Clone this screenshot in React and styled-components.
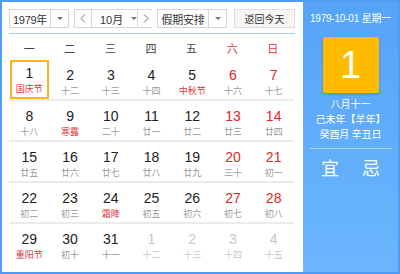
import React from "react";
import styled, { createGlobalStyle } from "styled-components";

const GlobalStyle = createGlobalStyle`
  body {
    margin: 0;
    font-family: "Liberation Sans", "Noto Sans CJK SC", sans-serif;
  }
`;

const Widget = styled.div`
  width: 400px;
  height: 274px;
  box-sizing: border-box;
  border: 2px solid #4e9cf6;
  display: flex;
  background: #fff;
`;

const LeftPanel = styled.div`
  width: 301px;
  box-sizing: border-box;
  padding: 7px 6px 0 7px;
  background: #fff;
`;

const Header = styled.div`
  display: flex;
  height: 19px;
  padding-bottom: 5px;
  border-bottom: 1px solid #a3cbf3;
  width: 286px;
`;

const Select = styled.div`
  display: flex;
  box-sizing: border-box;
  width: ${(p) => p.$width}px;
  height: 19px;
  border: 1px solid #d6d6d6;
  background: #fff;
  margin-right: ${(p) => p.$gap || 0}px;
`;

const SelectText = styled.div`
  flex: 1;
  display: flex;
  align-items: center;
  justify-content: center;
  font-size: 11px;
  color: #333;
  letter-spacing: -0.3px;
  white-space: nowrap;
`;

const ArrowBox = styled.div`
  width: 17px;
  display: flex;
  align-items: center;
  justify-content: center;
  border-left: 1px solid #d6d6d6;
  &::after {
    content: "";
    border-left: 3px solid transparent;
    border-right: 3px solid transparent;
    border-top: 3px solid #777;
  }
`;

const MonthGroup = styled.div`
  display: flex;
  box-sizing: border-box;
  width: 78px;
  height: 19px;
  border: 1px solid #d6d6d6;
  margin-right: 5px;
`;

const NavButton = styled.div`
  flex: 0 0 ${(p) => p.$width}px;
  display: flex;
  align-items: center;
  justify-content: center;
  border-${(p) => p.$side}: 1px solid #d6d6d6;
  background: #fff;
`;

const MonthText = styled.div`
  flex: 1;
  display: flex;
  align-items: center;
  padding-left: 8px;
  font-size: 11px;
  color: #333;
  white-space: nowrap;
`;

const SmallArrow = styled.span`
  margin-left: 8px;
  border-left: 3px solid transparent;
  border-right: 3px solid transparent;
  border-top: 3px solid #777;
`;

const TodayButton = styled.div`
  box-sizing: border-box;
  width: 61px;
  height: 19px;
  margin-left: 2px;
  border: 1px solid #dcdcdc;
  background: #f5f5f5;
  font-size: 10px;
  color: #333;
  display: flex;
  align-items: center;
  justify-content: center;
  white-space: nowrap;
`;

const WeekRow = styled.div`
  display: grid;
  grid-template-columns: repeat(7, 1fr);
  width: 284px;
  height: 26px;
  align-items: center;
`;

const WeekDay = styled.div`
  text-align: center;
  font-size: 11px;
  padding-top: 1px;
  color: ${(p) => (p.$weekend ? "#e0353b" : "#444")};
`;

const DayRow = styled.div`
  display: grid;
  grid-template-columns: repeat(7, 1fr);
  width: 285px;
  height: 39px;
  border-bottom: 2px solid ${(p) => (p.$last ? "transparent" : "#ebebeb")};
`;

const Cell = styled.div`
  box-sizing: border-box;
  margin: 0 1px;
  display: flex;
  flex-direction: column;
  align-items: center;
  border: 2px solid ${(p) => (p.$selected ? "#fdb414" : "transparent")};
  padding-top: ${(p) => (p.$selected ? 4 : 6)}px;
`;

const DayNum = styled.div`
  font-size: 14px;
  line-height: 15px;
  color: ${(p) => (p.$other ? "#c3c7d0" : p.$weekend ? "#e0262d" : "#222")};
`;

const Lunar = styled.div`
  margin-top: 2px;
  font-size: 9px;
  line-height: 12px;
  font-family: "Noto Sans CJK SC", sans-serif;
  color: ${(p) => (p.$other ? "#c8c8c8" : p.$festival ? "#e0353b" : "#9a9a9a")};
`;

const RightPanel = styled.div`
  flex: 1;
  background: linear-gradient(180deg, #55a4f6 0%, #6cb6ff 100%);
  color: #fff;
  display: flex;
  flex-direction: column;
  align-items: center;
  padding-top: 10px;
`;

const DateLine = styled.div`
  font-size: 10px;
  line-height: 14px;
  letter-spacing: -0.2px;
`;

const BigDay = styled.div`
  margin-top: 11px;
  width: 56px;
  height: 56px;
  border-radius: 2px;
  background: #ffbb00;
  box-shadow: 0 1px 3px rgba(0, 0, 0, 0.2);
  display: flex;
  align-items: center;
  justify-content: center;
  font-size: 38px;
  color: #fff;
`;

const LunarInfo = styled.div`
  margin-top: 3px;
  font-size: 10px;
  line-height: 15px;
  text-align: center;
  font-family: "Noto Sans CJK SC", sans-serif;
`;

const Rule = styled.div`
  align-self: stretch;
  margin: 7px 6px 0 7px;
  height: 1px;
  background: rgba(255, 255, 255, 0.45);
`;

const Advice = styled.div`
  margin-top: 8px;
  display: flex;
  gap: 23px;
  font-size: 18px;
  line-height: 20px;
  font-family: "Noto Sans CJK SC", sans-serif;
`;

const Chevron = ({ dir }) => (
  <svg width="6" height="9" viewBox="0 0 6 9">
    <polyline
      points={dir === "left" ? "5,0.5 1,4.5 5,8.5" : "1,0.5 5,4.5 1,8.5"}
      fill="none"
      stroke="#777"
      strokeWidth="1"
    />
  </svg>
);

const rows = [
  [[1, "国庆节", 1], [2, "十二"], [3, "十三"], [4, "十四"], [5, "中秋节", 1], [6, "十六"], [7, "十七"]],
  [[8, "十八"], [9, "寒露", 1], [10, "二十"], [11, "廿一"], [12, "廿二"], [13, "廿三"], [14, "廿四"]],
  [[15, "廿五"], [16, "廿六"], [17, "廿七"], [18, "廿八"], [19, "廿九"], [20, "三十"], [21, "初一"]],
  [[22, "初二"], [23, "初三"], [24, "霜降", 1], [25, "初五"], [26, "初六"], [27, "初七"], [28, "初八"]],
  [[29, "重阳节", 1], [30, "初十"], [31, "十一"], [1, "十二", 0, 1], [2, "十三", 0, 1], [3, "十四", 0, 1], [4, "十五", 0, 1]],
];

const weekDays = ["一", "二", "三", "四", "五", "六", "日"];

export default function App() {
  return (
    <>
      <GlobalStyle />
      <Widget>
        <LeftPanel>
          <Header>
            <Select $width={60} $gap={5}>
              <SelectText>1979年</SelectText>
              <ArrowBox />
            </Select>
            <MonthGroup>
              <NavButton $width={16} $side="right">
                <Chevron dir="left" />
              </NavButton>
              <MonthText>
                10月
                <SmallArrow />
              </MonthText>
              <NavButton $width={16} $side="left">
                <Chevron dir="right" />
              </NavButton>
            </MonthGroup>
            <Select $width={70} $gap={5}>
              <SelectText>假期安排</SelectText>
              <ArrowBox />
            </Select>
            <TodayButton>返回今天</TodayButton>
          </Header>
          <WeekRow>
            {weekDays.map((d, i) => (
              <WeekDay key={d} $weekend={i > 4}>
                {d}
              </WeekDay>
            ))}
          </WeekRow>
          {rows.map((row, r) => (
            <DayRow key={r} $last={r === rows.length - 1}>
              {row.map(([n, lunar, fest, other], i) => (
                <Cell key={i} $selected={r === 0 && i === 0}>
                  <DayNum $weekend={i > 4} $other={other}>
                    {n}
                  </DayNum>
                  <Lunar $festival={fest} $other={other}>
                    {lunar}
                  </Lunar>
                </Cell>
              ))}
            </DayRow>
          ))}
        </LeftPanel>
        <RightPanel>
          <DateLine>1979-10-01 星期一</DateLine>
          <BigDay>1</BigDay>
          <LunarInfo>
            八月十一
            <br />
            己未年【羊年】
            <br />
            癸酉月 辛丑日
          </LunarInfo>
          <Rule />
          <Advice>
            <span>宜</span>
            <span>忌</span>
          </Advice>
        </RightPanel>
      </Widget>
    </>
  );
}
